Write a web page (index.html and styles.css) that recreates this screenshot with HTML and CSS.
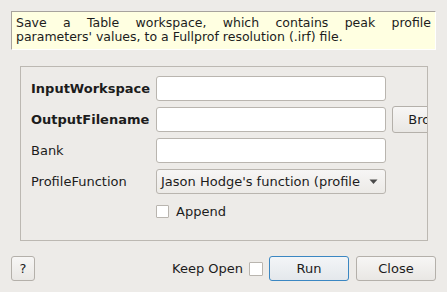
FILE: index.html
```html
<!DOCTYPE html>
<html>
<head>
<meta charset="utf-8">
<link rel="stylesheet" href="styles.css">
</head>
<body>
<div class="dialog">
  <div class="desc">
    <div class="line justify">Save a Table workspace, which contains peak profile</div>
    <div class="line">parameters' values, to a Fullprof resolution (.irf) file.</div>
  </div>
  <div class="group">
    <div class="row">
      <div class="label bold">InputWorkspace</div>
      <div class="field"></div>
    </div>
    <div class="row">
      <div class="label bold">OutputFilename</div>
      <div class="field"></div>
      <div class="btn browse">Browse</div>
    </div>
    <div class="row">
      <div class="label">Bank</div>
      <div class="field"></div>
    </div>
    <div class="row">
      <div class="label">ProfileFunction</div>
      <div class="combo">
        <span class="combo-text">Jason Hodge's function (profile</span>
        <svg class="arrow" width="9" height="6" viewBox="0 0 9 6"><path d="M0.5 0.5 L8.5 0.5 L4.5 5 Z" fill="#4a4a4a"/></svg>
      </div>
    </div>
    <div class="row check-row">
      <div class="label"></div>
      <div class="checkbox"></div>
      <span class="check-label">Append</span>
    </div>
  </div>
  <div class="footer">
    <div class="btn help">?</div>
    <div class="spacer"></div>
    <span class="keep">Keep Open</span>
    <div class="checkbox keep-box"></div>
    <div class="btn action run">Run</div>
    <div class="btn action">Close</div>
  </div>
</div>
</body>
</html>
```
FILE: styles.css
```css
html, body {
  margin: 0;
  padding: 0;
}
body {
  background: #edebe8;
  font-family: "DejaVu Sans", sans-serif;
  font-size: 13px;
  color: #1c1c1c;
  width: 447px;
  height: 292px;
  overflow: hidden;
}
.dialog {
  display: flex;
  flex-direction: column;
  padding: 11px 11px 0 11px;
}
.desc {
  height: 39px;
  box-sizing: border-box;
  background: #ffffe1;
  border-top: 1px solid #a7a39d;
  border-left: 1px solid #a7a39d;
  border-right: 1px solid #ffffff;
  border-bottom: 1px solid #ffffff;
  padding: 4px 4px 0 4px;
  font-size: 12.5px;
  line-height: 14px;
}
.line.justify {
  text-align: justify;
  text-align-last: justify;
}
.group {
  margin: 16px 8px 0 9px;
  height: 175px;
  box-sizing: border-box;
  border: 1px solid #bcb8b2;
  padding: 9px 0 0 10px;
  overflow: hidden;
  display: flex;
  flex-direction: column;
  gap: 6px;
}
.row {
  display: flex;
  align-items: center;
  height: 25px;
  flex-shrink: 0;
}
.label {
  width: 125px;
  flex-shrink: 0;
  white-space: nowrap;
}
.bold {
  font-weight: bold;
}
.field {
  width: 230px;
  height: 25px;
  box-sizing: border-box;
  background: #ffffff;
  border: 1px solid #b9b5af;
  border-radius: 3px;
  flex-shrink: 0;
}
.btn {
  box-sizing: border-box;
  height: 25px;
  border: 1px solid #b4b0aa;
  border-radius: 3px;
  background: linear-gradient(#f7f6f5, #e9e7e4);
  display: flex;
  align-items: center;
  justify-content: center;
  flex-shrink: 0;
  white-space: nowrap;
}
.browse {
  margin-left: 6px;
  width: 80px;
  height: 27px;
}
.combo {
  width: 230px;
  height: 25px;
  box-sizing: border-box;
  border: 1px solid #b9b5af;
  border-radius: 3px;
  background: linear-gradient(#f7f6f5, #eceae7);
  display: flex;
  align-items: center;
  padding: 0 7px 0 4px;
  flex-shrink: 0;
  overflow: hidden;
}
.combo-text {
  flex: 1;
  white-space: nowrap;
  margin-right: 6px;
}
.arrow {
  flex-shrink: 0;
}
.check-row {
  height: 22px;
}
.checkbox {
  width: 13px;
  height: 13px;
  box-sizing: border-box;
  background: #ffffff;
  border: 1px solid #b9b5af;
  border-radius: 1px;
  flex-shrink: 0;
}
.check-label {
  margin-left: 7px;
}
.footer {
  margin-top: 15px;
  display: flex;
  align-items: center;
  height: 25px;
}
.help {
  width: 24px;
}
.spacer {
  flex: 1;
}
.keep {
  margin-right: 6px;
}
.keep-box {
  width: 14px;
  height: 14px;
  margin-right: 6px;
}
.action {
  width: 80px;
  margin-left: 0;
}
.run {
  border-color: #3b87c2;
  background: linear-gradient(#f3f5f7, #e4e8ec);
  margin-right: 7px;
}
```
